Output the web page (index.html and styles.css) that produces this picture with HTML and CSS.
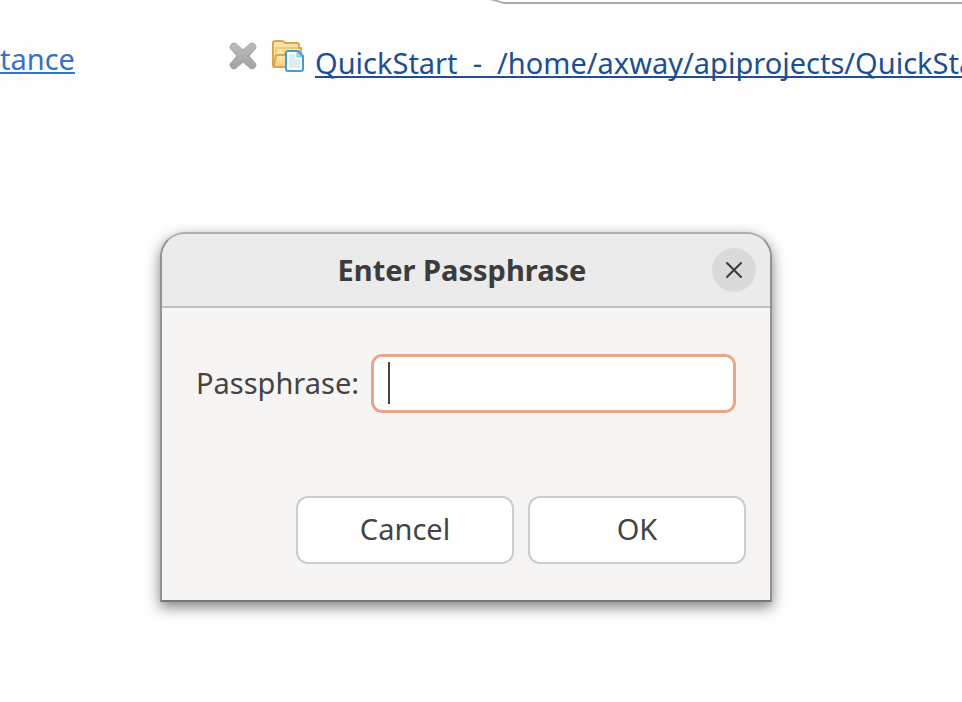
FILE: index.html
```html
<!DOCTYPE html>
<html lang="en">
<head>
<meta charset="utf-8">
<title>Enter Passphrase</title>
<link rel="stylesheet" href="styles.css">
</head>
<body>
<main class="workspace">
  <svg class="panel-edge" width="100%" height="5" aria-hidden="true">
    <path d="M489-1 C496 0 499 2 504 3 H4000" fill="none" stroke="#acacac" stroke-width="2"/>
  </svg>
  <div class="links">
    <a class="link link-left" href="#">tance</a>
    <div class="project">
      <svg class="remove-icon" width="30" height="30" viewBox="0 0 30 30" aria-hidden="true">
        <defs><linearGradient id="gray" x1="0" y1="0" x2="0" y2="1"><stop offset="0" stop-color="#bcbcbc"/><stop offset="1" stop-color="#a2a2a2"/></linearGradient></defs>
        <path d="M7 2 L15 9 L23 2 Q28 2 28 7 L21 15 L28 23 Q28 28 23 28 L15 21 L7 28 Q2 28 2 23 L9 15 L2 7 Q2 2 7 2Z" fill="url(#gray)" stroke="#a3a3a3" stroke-width="1" stroke-linejoin="round"/>
      </svg>
      <svg class="folder-icon" width="34" height="34" viewBox="0 0 34 34" aria-hidden="true">
        <defs><linearGradient id="fold" x1="0" y1="0" x2="0" y2="1"><stop offset="0" stop-color="#ffeebb"/><stop offset="1" stop-color="#f5d083"/></linearGradient></defs>
        <path d="M2 27 V4 Q2 2 4 2 H11 Q13 2 14 4 H26 Q28 4 28 6 V9 H30 V28 H3Z" fill="#fbe3a4" stroke="#dba654" stroke-width="2" stroke-linejoin="round"/>
        <path d="M3 27 L5 16 H13 L16 13 H30 V28 H3Z" fill="url(#fold)" stroke="#dba654" stroke-width="2" stroke-linejoin="round"/>
        <path d="M5 14 V9 H27" fill="none" stroke="#f1c878" stroke-width="2"/>
        <path d="M17 12 H27 L32 17 V30 Q32 32 30 32 H17 Q15 32 15 30 V14 Q15 12 17 12Z" fill="#fff" stroke="#469bd2" stroke-width="2" stroke-linejoin="round"/>
        <path d="M18 15 H24 V20 H29 V29 H18Z" fill="#d9eef6"/>
        <path d="M26 13 V18 H31Z" fill="#a9dbf2" stroke="#7fbfe4"/>
      </svg>
      <a class="link link-project" href="#">QuickStart  -  /home/axway/apiprojects/QuickStart</a>
    </div>
  </div>

  <section class="dialog" role="dialog" aria-labelledby="dialog-title">
    <header class="titlebar">
      <h1 class="title" id="dialog-title">Enter Passphrase</h1>
      <button class="close" type="button" aria-label="Close">
        <svg width="18" height="18" viewBox="0 0 18 18" aria-hidden="true"><path d="M2 2 L16 16 M16 2 L2 16" stroke="#3c3c3c" stroke-width="2" stroke-linecap="round"/></svg>
      </button>
    </header>
    <form class="form">
      <div class="field">
        <label for="passphrase">Passphrase:</label>
        <div class="entry">
          <input id="passphrase" type="password">
          <span class="caret"></span>
        </div>
      </div>
      <div class="actions">
        <button class="action" type="button">Cancel</button>
        <button class="action" type="button">OK</button>
      </div>
    </form>
  </section>
</main>
</body>
</html>
```
FILE: styles.css
```css
* {
  box-sizing: border-box;
}

body {
  margin: 0;
  background: #fefefe;
  color: #444;
  font-family: "Noto Sans", sans-serif;
  font-size: 29px;
  line-height: 40px;
}

.workspace {
  position: relative;
  min-height: 100vh;
  overflow: hidden;
}

.panel-edge {
  display: block;
}

.links {
  display: flex;
  align-items: flex-start;
  padding-top: 34px;
}

.link {
  white-space: pre;
  text-decoration-thickness: 2px;
  text-underline-offset: 2px;
  text-decoration-skip-ink: none;
}

.link-left {
  flex: 0 0 228px;
  color: #3871c8;
}

.link-project {
  margin: 4px 0 0 10px;
  color: #204f91;
}

.project {
  display: flex;
  align-items: flex-start;
  min-width: 0;
}

.remove-icon {
  flex: none;
  margin-top: 2px;
}

.folder-icon {
  flex: none;
  margin-left: 13px;
}

.dialog {
  position: absolute;
  top: 232px;
  left: 160px;
  width: 612px;
  border: 2px solid #929292;
  border-top-color: #adadad;
  border-bottom-color: #777;
  border-radius: 25px 25px 0 0;
  background: #f6f5f4;
  box-shadow: 0 5px 14px rgba(0, 0, 0, 0.5);
}

.titlebar {
  display: grid;
  grid-template-columns: 36px 1fr 44px;
  align-items: center;
  height: 74px;
  padding: 0 14px;
  border-bottom: 2px solid #bfbfbf;
  border-radius: 23px 23px 0 0;
  background: #ebebeb;
}

.title {
  grid-column: 2;
  margin: 0;
  color: #3c3c3c;
  font-size: 29px;
  font-weight: 700;
  text-align: center;
}

.close {
  display: grid;
  place-items: center;
  width: 44px;
  height: 44px;
  padding: 0;
  border: 0;
  border-radius: 50%;
  background: #dadada;
}

.form {
  padding: 46px 24px 36px;
}

.field {
  display: flex;
  align-items: center;
  gap: 12px;
  padding: 0 10px;
}

.field label {
  padding-bottom: 2px;
}

.entry {
  position: relative;
  flex: 1;
}

.entry input {
  display: block;
  width: 100%;
  height: 59px;
  padding: 0 16px;
  border: 3px solid #eba58b;
  border-radius: 11px;
  outline: 0;
  background: #fff;
  font: inherit;
}

.caret {
  position: absolute;
  top: 8px;
  left: 17px;
  width: 2px;
  height: 42px;
  background: #444;
}

.actions {
  display: flex;
  justify-content: flex-end;
  gap: 14px;
  margin-top: 83px;
}

.action {
  width: 218px;
  height: 68px;
  padding: 0 0 2px;
  border: 2px solid #cdcdcd;
  border-radius: 12px;
  background: #fff;
  color: #444;
  font: inherit;
}
```
